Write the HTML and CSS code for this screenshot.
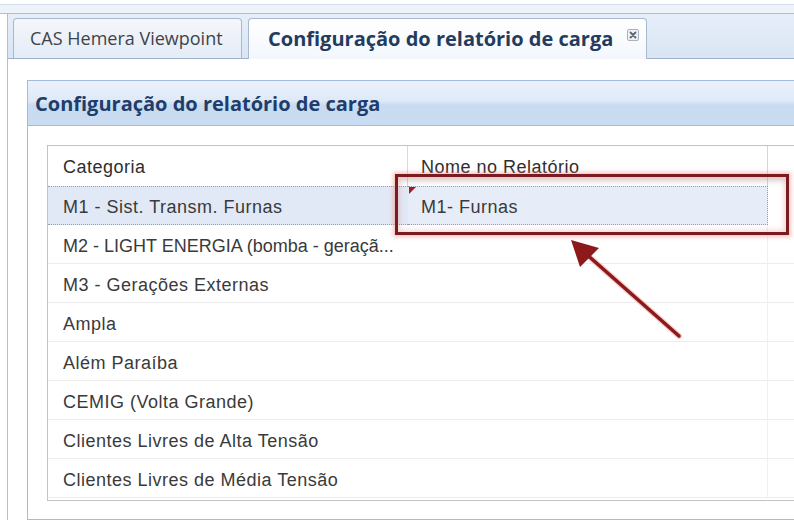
FILE: index.html
```html
<!DOCTYPE html>
<html lang="pt">
<head>
<meta charset="utf-8">
<title>Configuração do relatório de carga</title>
<link rel="stylesheet" href="styles.css">
</head>
<body>
<div class="page">
  <div class="topstrip"></div>
  <div class="window">
    <div class="tabbar">
      <div class="tab">CAS Hemera Viewpoint</div>
      <div class="tab active">
        <span>Configuração do relatório de carga</span>
        <svg class="close" width="12" height="12" viewBox="0 0 12 12">
          <rect x="0.5" y="0.5" width="11" height="11" rx="1.5" fill="#eef1f5" stroke="#a9b1bc"/>
          <path d="M3.5 3.5 L8.5 8.5 M8.5 3.5 L3.5 8.5" stroke="#5d6570" stroke-width="1.8" stroke-linecap="round"/>
        </svg>
      </div>
    </div>
    <div class="tabbody">
      <div class="panel">
        <div class="panel-head">Configuração do relatório de carga</div>
        <div class="panel-body">
          <div class="grid">
            <div class="row head">
              <div class="cell c1">Categoria</div>
              <div class="cell c2">Nome no Relatório</div>
              <div class="cell c3"></div>
            </div>
            <div class="row sel">
              <div class="cell c1">M1 - Sist. Transm. Furnas</div>
              <div class="cell c2"><span class="dirty"></span>M1- Furnas</div>
              <div class="cell c3"></div>
            </div>
            <div class="row">
              <div class="cell c1 tight">M2 - LIGHT ENERGIA (bomba - geraçã...</div>
              <div class="cell c2"></div>
              <div class="cell c3"></div>
            </div>
            <div class="row">
              <div class="cell c1">M3 - Gerações Externas</div>
              <div class="cell c2"></div>
              <div class="cell c3"></div>
            </div>
            <div class="row">
              <div class="cell c1">Ampla</div>
              <div class="cell c2"></div>
              <div class="cell c3"></div>
            </div>
            <div class="row">
              <div class="cell c1">Além Paraíba</div>
              <div class="cell c2"></div>
              <div class="cell c3"></div>
            </div>
            <div class="row">
              <div class="cell c1">CEMIG (Volta Grande)</div>
              <div class="cell c2"></div>
              <div class="cell c3"></div>
            </div>
            <div class="row">
              <div class="cell c1">Clientes Livres de Alta Tensão</div>
              <div class="cell c2"></div>
              <div class="cell c3"></div>
            </div>
            <div class="row">
              <div class="cell c1">Clientes Livres de Média Tensão</div>
              <div class="cell c2"></div>
              <div class="cell c3"></div>
            </div>
          </div>
        </div>
      </div>
    </div>
  </div>
  <div class="highlight"></div>
  <svg class="arrow" width="794" height="528" viewBox="0 0 794 528">
    <line x1="679" y1="336" x2="585" y2="253" stroke="#f2b0b0" stroke-width="6" stroke-linecap="round" opacity="0.6"/>
    <line x1="679" y1="336" x2="585" y2="253" stroke="#8c1a1a" stroke-width="3.5" stroke-linecap="round"/>
    <polygon points="571,240 599,248 580,267" fill="#8c1a1a"/>
  </svg>
</div>
</body>
</html>
```

FILE: styles.css
```css
* { box-sizing: border-box; }

html, body {
  margin: 0;
  padding: 0;
  background: #ffffff;
}

.page {
  position: relative;
  width: 794px;
  height: 528px;
  overflow: hidden;
  background: #ffffff;
}

.topstrip {
  height: 14px;
  background: linear-gradient(#ffffff 0 4px, #d3deeb 4px 5px, #eef3fa 5px 13px, #aebfd4 13px 14px);
}

.window {
  margin-left: 7px;
  border-left: 1px solid #a9c1dd;
}

.tabbar {
  display: flex;
  align-items: flex-end;
  gap: 6px;
  height: 45px;
  padding: 4px 0 0 5px;
  background: linear-gradient(#e6eef9, #d9e5f4);
  border-bottom: 1px solid #9fb1c7;
}

.tab {
  display: flex;
  align-items: center;
  width: 229px;
  height: 40px;
  padding-left: 16px;
  padding-bottom: 2px;
  border: 1px solid #a8b9cd;
  border-bottom: none;
  border-radius: 4px 4px 0 0;
  background: linear-gradient(#f4f7fb, #e4ecf6);
  font-family: "Open Sans", "DejaVu Sans", sans-serif;
  font-size: 18px;
  color: #3f4349;
  white-space: nowrap;
}

.tab.active {
  width: 399px;
  height: 41px;
  margin-bottom: -1px;
  padding-left: 19px;
  background: linear-gradient(#ffffff, #f3f7fc);
  font-weight: 700;
  font-size: 20px;
  color: #233b5e;
}

.tab .close {
  margin-left: 14px;
  margin-top: -6px;
  flex: none;
}

.tabbody {
  padding: 21px 0 0 19px;
  background: #ffffff;
}

.panel {
  width: 900px;
  border: 1px solid #a2bcdc;
  border-right: none;
}

.panel-head {
  display: flex;
  align-items: center;
  height: 45px;
  padding-left: 7px;
  padding-top: 1px;
  background: linear-gradient(#eaf1fb 0%, #dfe9f7 45%, #c8dbf1 55%, #c9dcf2 100%);
  border-bottom: 1px solid #a2bcdc;
  font-family: "Open Sans", "DejaVu Sans", sans-serif;
  font-weight: 700;
  font-size: 20px;
  color: #1e3d6b;
  white-space: nowrap;
}

.panel-body {
  padding: 19px 0 18px 19px;
  background: #ffffff;
}

.grid {
  width: 860px;
  border: 1px solid #c3c3c3;
  border-right: none;
  padding-bottom: 2px;
  font-family: "Liberation Sans", Arial, sans-serif;
  font-size: 18px;
  letter-spacing: 0.5px;
  color: #3a3a3a;
}

.row {
  display: flex;
  height: 39px;
}

.row.head {
  height: 40px;
  color: #2e2e2e;
}

.cell {
  position: relative;
  display: flex;
  align-items: center;
  padding-left: 15px;
  padding-top: 4px;
  white-space: nowrap;
  overflow: hidden;
  border-bottom: 1px solid #ececec;
}

.c1 { width: 360px; }
.c2 { width: 360px; padding-left: 13px; border-right: 1px solid #f0f0f0; }
.c3 { flex: 1; }

.tight { letter-spacing: 0; }

.row.head .cell {
  border-bottom: none;
  padding-top: 3px;
}

.row.head .c1 { border-right: 1px solid #dadada; }
.row.head .c2 { border-right: 1px solid #d6d6d6; }

.row.sel .c1,
.row.sel .c2 {
  background: #e1e9f6;
  border-top: 1px dotted #9c9c9c;
  border-bottom: 1px dotted #9c9c9c;
}

.row.sel .c2 {
  background: #e6edf8;
  border-right: 1px dotted #9c9c9c;
}

.row.sel .c3 {
  border-bottom-color: transparent;
}

.dirty {
  position: absolute;
  left: 1px;
  top: 0;
  width: 0;
  height: 0;
  border-top: 7px solid #a41c2a;
  border-right: 7px solid transparent;
}

.highlight {
  position: absolute;
  left: 395px;
  top: 174px;
  width: 394px;
  height: 61px;
  border: 3px solid #7a1b1f;
  box-shadow: 0 0 4px 2px rgba(240, 120, 120, 0.45), inset 0 0 5px 2px rgba(235, 140, 140, 0.35), inset 0 8px 6px -4px rgba(120, 120, 120, 0.25);
}

.arrow {
  position: absolute;
  left: 0;
  top: 0;
  pointer-events: none;
}
```
